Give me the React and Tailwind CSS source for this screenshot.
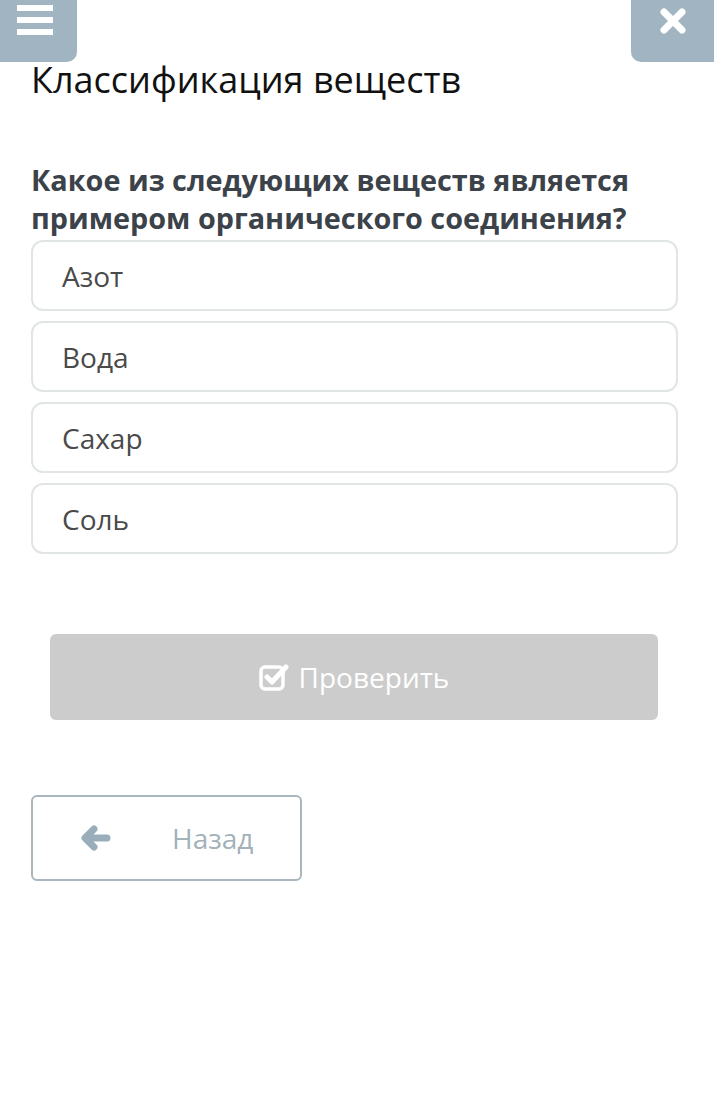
import { useState } from "react";

const options = ["Азот", "Вода", "Сахар", "Соль"];

export default function App() {
  const [selected, setSelected] = useState(null);

  return (
    <div className="min-h-screen bg-white font-['Open_Sans',sans-serif] text-[#333]">
      {/* верхняя панель */}
      <div className="flex justify-between h-[62px]">
        <button className="w-[77px] h-[62px] bg-[#a1b4c2] rounded-br-[10px] flex items-start pl-[17px] pt-[5px]">
          <div className="flex flex-col gap-[6px]">
            <span className="block w-[36px] h-[6px] bg-white" />
            <span className="block w-[36px] h-[6px] bg-white" />
            <span className="block w-[36px] h-[6px] bg-white" />
          </div>
        </button>
        <button className="w-[83px] h-[62px] bg-[#a1b4c2] rounded-bl-[10px] flex justify-center items-start pt-[6px] pl-[1px]">
          <svg width="30" height="30" viewBox="0 0 30 30">
            <path d="M6 6 L24 24 M24 6 L6 24" stroke="white" strokeWidth="7" strokeLinecap="round" />
          </svg>
        </button>
      </div>

      <div className="px-[31px]">
        <h1 className="text-[36px] leading-[40px] font-normal text-[#111] -mt-[2px]">Классификация веществ</h1>

        <p className="mt-[61px] text-[28.8px] leading-[38px] font-bold text-[#3c4249]">
          Какое из следующих веществ является примером органического соединения?
        </p>

        <div className="mt-[3px] flex flex-col gap-[10px] w-[647px]">
          {options.map((o, i) => (
            <button
              key={o}
              onClick={() => setSelected(i)}
              className={`h-[71px] rounded-[12px] border-2 text-left pl-[29px] text-[28px] text-[#4a4a4a] ${selected === i ? "border-[#a1b4c2]" : "border-[#e1e5e6]"}`}
            >
              {o}
            </button>
          ))}
        </div>

        <div className="mt-[80px] pl-[19px]">
          <button className="w-[608px] h-[86px] bg-[#cccccc] rounded-[6px] flex items-center justify-center gap-[10px] text-white text-[28px]">
            <svg width="30" height="28" viewBox="0 0 30 28">
              <rect x="2" y="4" width="22" height="22" rx="4" fill="none" stroke="white" strokeWidth="3.5" />
              <path d="M8 14 L13 19 L27 4" fill="none" stroke="white" strokeWidth="5" strokeLinecap="round" strokeLinejoin="round" />
            </svg>
            <span>Проверить</span>
          </button>
        </div>

        <button className="mt-[75px] w-[271px] h-[86px] border-2 border-[#a9b6bd] rounded-[6px] flex items-center text-[28px] text-[#a3b1b9]">
          <svg className="ml-[48px]" width="30" height="26" viewBox="0 0 30 26">
            <path d="M13 4 L4 13 L13 22 M5 13 L26 13" fill="none" stroke="#99aeba" strokeWidth="7" strokeLinecap="round" strokeLinejoin="round" />
          </svg>
          <span className="ml-[61px]">Назад</span>
        </button>
      </div>
    </div>
  );
}
